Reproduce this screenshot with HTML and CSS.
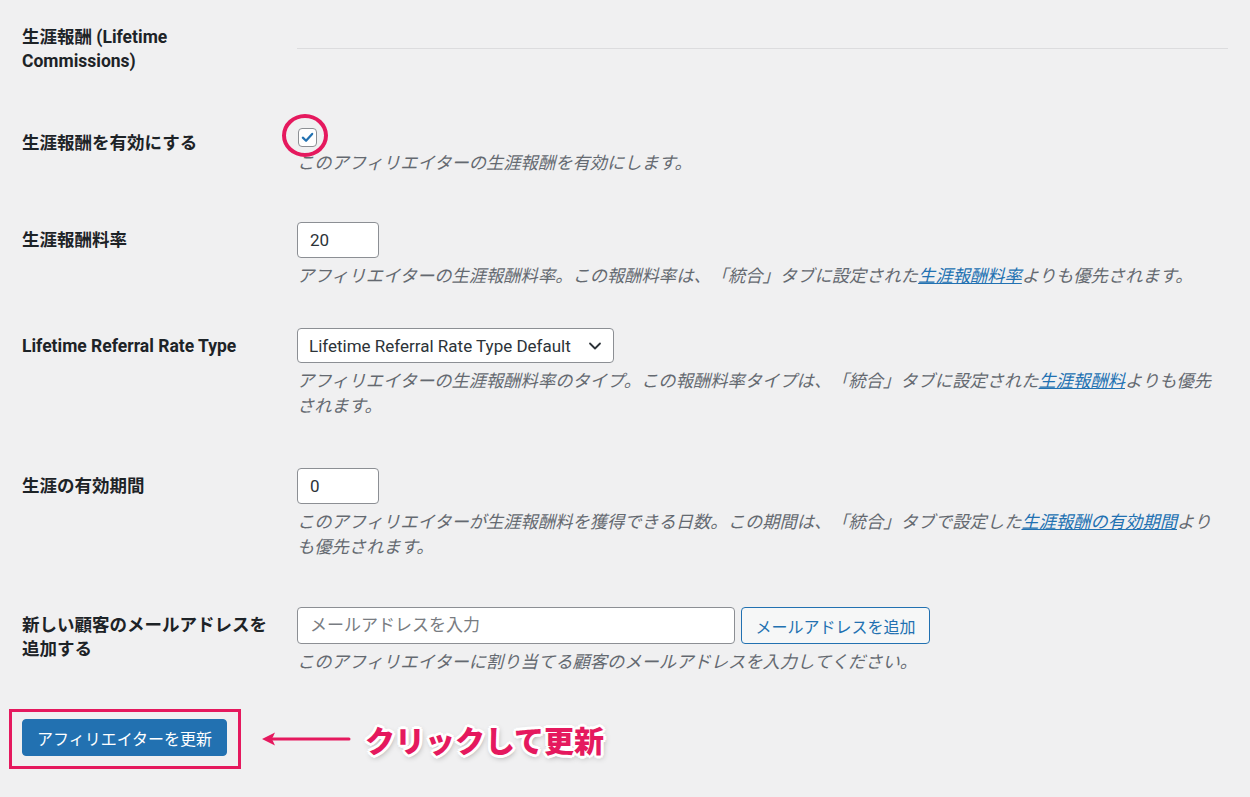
FILE: index.html
```html
<!DOCTYPE html>
<html lang="ja">
<head>
<meta charset="utf-8">
<title>生涯報酬</title>
<link rel="stylesheet" href="styles.css">
</head>
<body>
<div class="form">
  <div class="row row--head">
    <div class="row-label">生涯報酬 (Lifetime Commissions)</div>
    <div class="row-field"><div class="divider"></div></div>
  </div>

  <div class="row row--check">
    <div class="row-label row-label--check">生涯報酬を有効にする</div>
    <div class="row-field">
      <span class="checkbox">
        <svg class="checkmark" viewBox="0 0 20 20" width="17" height="17"><path d="M4.5 10.2 L8.3 13.8 L15.5 5.8" fill="none" stroke="#2271b1" stroke-width="2.6" stroke-linecap="round" stroke-linejoin="round"/></svg>
        <span class="highlight-circle"></span>
      </span>
      <p class="desc desc--check">このアフィリエイターの生涯報酬を有効にします。</p>
    </div>
  </div>

  <div class="row row--rate">
    <div class="row-label">生涯報酬料率</div>
    <div class="row-field">
      <div class="input input--small">20</div>
      <p class="desc">アフィリエイターの生涯報酬料率。この報酬料率は、「統合」タブに設定された<a class="link" href="#">生涯報酬料率</a>よりも優先されます。</p>
    </div>
  </div>

  <div class="row row--type">
    <div class="row-label">Lifetime Referral Rate Type</div>
    <div class="row-field">
      <div class="select">
        <span class="select-text">Lifetime Referral Rate Type Default</span>
        <svg class="chevron" viewBox="0 0 16 16" width="16" height="16"><path d="M3 5.5 L8 10.5 L13 5.5" fill="none" stroke="#2c3338" stroke-width="1.8" stroke-linecap="round" stroke-linejoin="round"/></svg>
      </div>
      <p class="desc">アフィリエイターの生涯報酬料率のタイプ。この報酬料率タイプは、「統合」タブに設定された<a class="link" href="#">生涯報酬料</a>よりも優先されます。</p>
    </div>
  </div>

  <div class="row row--period">
    <div class="row-label">生涯の有効期間</div>
    <div class="row-field">
      <div class="input input--small">0</div>
      <p class="desc">このアフィリエイターが生涯報酬料を獲得できる日数。この期間は、「統合」タブで設定した<a class="link" href="#">生涯報酬の有効期間</a>よりも優先されます。</p>
    </div>
  </div>

  <div class="row row--email">
    <div class="row-label">新しい顧客のメールアドレスを追加する</div>
    <div class="row-field">
      <div class="email-line">
        <div class="input input--email placeholder">メールアドレスを入力</div>
        <button class="btn-secondary" type="button">メールアドレスを追加</button>
      </div>
      <p class="desc">このアフィリエイターに割り当てる顧客のメールアドレスを入力してください。</p>
    </div>
  </div>
</div>

<div class="submit-row">
  <div class="submit-box">
    <button class="btn-primary" type="button">アフィリエイターを更新</button>
  </div>
  <svg class="arrow" viewBox="0 0 90 20" width="90" height="20"><path d="M12 10 H88" stroke="#e5195e" stroke-width="3" stroke-linecap="round"/><path d="M1 10 L14 3.5 L11 10 L14 16.5 Z" fill="#e5195e"/></svg>
  <span class="callout">クリックして更新</span>
</div>
</body>
</html>
```

FILE: styles.css
```css
html, body {
  margin: 0;
  padding: 0;
  background: #f0f0f1;
}

body {
  font-family: Roboto, "Noto Sans CJK JP", sans-serif;
  color: #1d2327;
  width: 1250px;
  height: 797px;
  overflow: hidden;
  text-spacing-trim: space-all;
}

.form {
  padding: 19px 22px 0 22px;
}

.row {
  display: grid;
  grid-template-columns: 250px 1fr;
  column-gap: 25px;
}

.row--check { margin-top: 55px; }
.row--rate { margin-top: 46px; }
.row--type { margin-top: 39px; }
.row--period { margin-top: 49px; }
.row--email { margin-top: 47px; }

.row-label {
  font-size: 17.5px;
  font-weight: 700;
  line-height: 24px;
  color: #1d2327;
  padding-top: 6px;
}

.row-label--check {
  padding-top: 3px;
}

.row-field {
  min-width: 0;
}

.divider {
  margin-top: 29px;
  height: 1px;
  background: #dcdcde;
}

.checkbox {
  position: relative;
  display: flex;
  align-items: center;
  justify-content: center;
  width: 17px;
  height: 17px;
  border: 1px solid #8c8f94;
  border-radius: 4px;
  background: #fff;
  margin-left: 1px;
}

.highlight-circle {
  position: absolute;
  left: -17px;
  top: -15px;
  width: 38px;
  height: 35px;
  border: 4px solid #e5195e;
  border-radius: 50%;
}

.desc {
  margin: 6px 0 0 0;
  max-width: 925px;
  font-size: 17.3px;
  line-height: 25px;
  font-style: italic;
  color: #646970;
}

.desc--check {
  margin-top: 4px;
}

.link {
  color: #2271b1;
  text-decoration: underline;
}

.input {
  box-sizing: border-box;
  height: 36px;
  border: 1px solid #8c8f94;
  border-radius: 4px;
  background: #fff;
  padding: 0 12px;
  font-size: 17px;
  line-height: 34px;
  color: #2c3338;
}

.input--small {
  width: 82px;
}

.input--email {
  width: 438px;
  height: 37px;
  line-height: 35px;
}

.placeholder {
  color: #787c82;
}

.select {
  box-sizing: border-box;
  width: 317px;
  height: 35px;
  display: flex;
  align-items: center;
  justify-content: space-between;
  border: 1px solid #8c8f94;
  border-radius: 4px;
  background: #fff;
  padding: 0 10px 0 11px;
  font-size: 17px;
  color: #2c3338;
}

.select-text {
  white-space: nowrap;
}

.chevron {
  flex: none;
}

.email-line {
  display: flex;
  gap: 6px;
}

.btn-secondary {
  box-sizing: border-box;
  width: 189px;
  height: 37px;
  border: 1px solid #2271b1;
  border-radius: 4px;
  background: #f6f7f7;
  color: #2271b1;
  font-family: Roboto, "Noto Sans CJK JP", sans-serif;
  font-size: 16px;
  padding: 0;
}

.submit-row {
  margin-top: 34px;
  padding-left: 9px;
  display: flex;
  align-items: center;
}

.submit-box {
  box-sizing: border-box;
  width: 232px;
  height: 60px;
  border: 3px solid #e5195e;
  padding: 7px 0 0 10px;
}

.btn-primary {
  box-sizing: border-box;
  width: 205px;
  height: 37px;
  border: 1px solid #2271b1;
  border-radius: 4px;
  background: #2271b1;
  color: #fff;
  font-family: Roboto, "Noto Sans CJK JP", sans-serif;
  font-size: 16px;
  padding: 0;
}

.arrow {
  margin-left: 20px;
  flex: none;
}

.callout {
  margin-left: 14px;
  font-family: "Noto Sans CJK JP", sans-serif;
  font-size: 30px;
  font-weight: 900;
  line-height: 36px;
  color: #e5195e;
  text-shadow:
    2px 0 0 #fff, -2px 0 0 #fff, 0 2px 0 #fff, 0 -2px 0 #fff,
    2px 2px 0 #fff, -2px -2px 0 #fff, 2px -2px 0 #fff, -2px 2px 0 #fff,
    3px 0 0 #fff, -3px 0 0 #fff, 0 3px 0 #fff, 0 -3px 0 #fff,
    1px 2px 6px rgba(0, 0, 0, 0.45);
}
```
